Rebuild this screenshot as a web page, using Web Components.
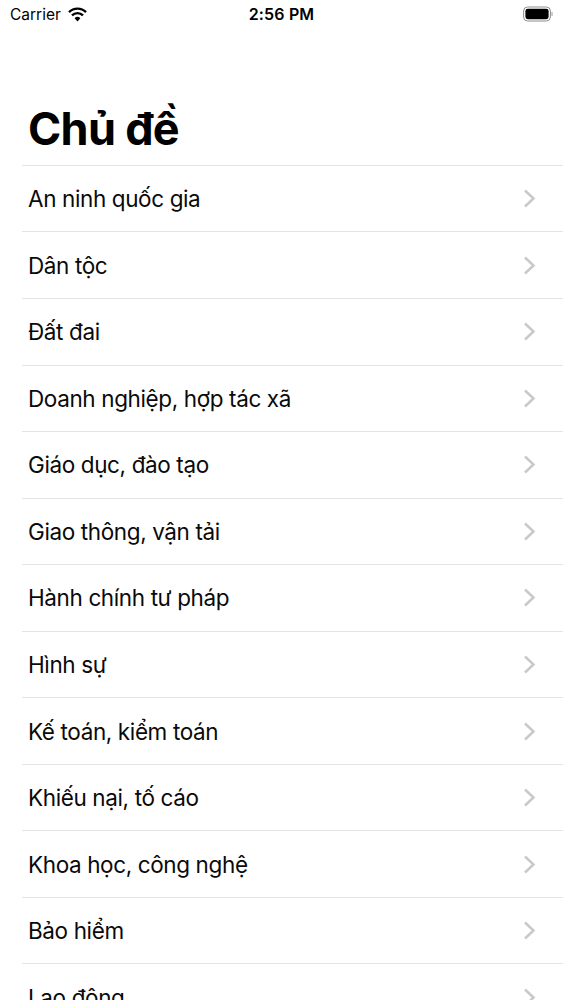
<!DOCTYPE html>
<html lang="vi">
<head>
<meta charset="utf-8">
<title>Chủ đề</title>
<style>
  html, body { margin: 0; padding: 0; height: 1000px; overflow: hidden; background: #fff; }
  body { font-family: Inter, "Liberation Sans", sans-serif; color: #000; }
</style>
</head>
<body>
<topic-app></topic-app>

<script>
const statusTemplate = document.createElement('template');
statusTemplate.innerHTML = `
  <style>
    :host {
      display: grid;
      grid-template-columns: 1fr auto 1fr;
      align-items: center;
      height: 28px;
      padding: 0 10px 1px;
      font-size: 15.5px;
      color: #000;
    }
    .left { display: flex; align-items: center; gap: 7px; }
    .time { font-weight: 600; font-size: 16px; letter-spacing: 0.15px; }
    .right { display: flex; justify-content: flex-end; }
    svg { display: block; }
  </style>
  <div class="left">
    <span>Carrier</span>
    <svg width="19" height="15" viewBox="0 0 19 15">
      <path d="M1 5.2a12 12 0 0 1 17 0" fill="none" stroke="#000" stroke-width="2.4"/>
      <path d="M4 8.4a7.8 7.8 0 0 1 11 0" fill="none" stroke="#000" stroke-width="2.4"/>
      <path d="M6.6 11.2 9.5 14.4l2.9-3.2a4.2 4.2 0 0 0-5.8 0z" fill="#000"/>
    </svg>
  </div>
  <div class="time">2:56 PM</div>
  <div class="right">
    <svg width="30" height="16" viewBox="0 0 30 16">
      <rect x="0.6" y="1" width="26.8" height="14" rx="4" fill="none" stroke="#8e8e8e" stroke-width="1"/>
      <rect x="2.4" y="2.8" width="23.2" height="10.4" rx="2.4" fill="#000"/>
      <rect x="28.4" y="6" width="1.2" height="4" rx="0.6" fill="#a8a8a8"/>
    </svg>
  </div>
`;

class StatusBar extends HTMLElement {
  constructor() {
    super();
    this.attachShadow({ mode: 'open' }).appendChild(statusTemplate.content.cloneNode(true));
  }
}
customElements.define('status-bar', StatusBar);

const rowTemplate = document.createElement('template');
rowTemplate.innerHTML = `
  <style>
    :host {
      display: flex;
      align-items: center;
      justify-content: space-between;
      box-sizing: border-box;
      height: 66.55px;
      padding: 0 27px 0 6px;
      border-top: 1px solid #e4e4e6;
      font-size: 22.5px;
      letter-spacing: -0.38px;
      color: #0a0a0a;
    }
    svg { display: block; flex: none; }
  </style>
  <slot></slot>
  <svg width="13" height="19" viewBox="0 0 13 19">
    <path d="M2 1.5 10.5 9.5 2 17.5" fill="none" stroke="#c9c9cc" stroke-width="2.5"/>
  </svg>
`;

class TopicRow extends HTMLElement {
  constructor() {
    super();
    this.attachShadow({ mode: 'open' }).appendChild(rowTemplate.content.cloneNode(true));
  }
}
customElements.define('topic-row', TopicRow);

const appTemplate = document.createElement('template');
appTemplate.innerHTML = `
  <style>
    :host { display: block; height: 1000px; overflow: hidden; }
    h1 {
      margin: 0;
      padding: 69px 0 0 28px;
      height: 67px;
      font-size: 45px;
      line-height: 61px;
      font-weight: 700;
      letter-spacing: -0.7px;
    }
    .list { margin-left: 22px; margin-top: -0.1px; }
  </style>
  <status-bar></status-bar>
  <h1>Chủ đề</h1>
  <div class="list"></div>
`;

const topics = [
  'An ninh quốc gia', 'Dân tộc', 'Đất đai', 'Doanh nghiệp, hợp tác xã',
  'Giáo dục, đào tạo', 'Giao thông, vận tải', 'Hành chính tư pháp', 'Hình sự',
  'Kế toán, kiểm toán', 'Khiếu nại, tố cáo', 'Khoa học, công nghệ', 'Bảo hiểm', 'Lao động'
];

class TopicApp extends HTMLElement {
  constructor() {
    super();
    this.attachShadow({ mode: 'open' }).appendChild(appTemplate.content.cloneNode(true));
    const list = this.shadowRoot.querySelector('.list');
    topics.forEach(t => {
      const row = document.createElement('topic-row');
      row.textContent = t;
      list.appendChild(row);
    });
  }
}
customElements.define('topic-app', TopicApp);
</script>
</body>
</html>
